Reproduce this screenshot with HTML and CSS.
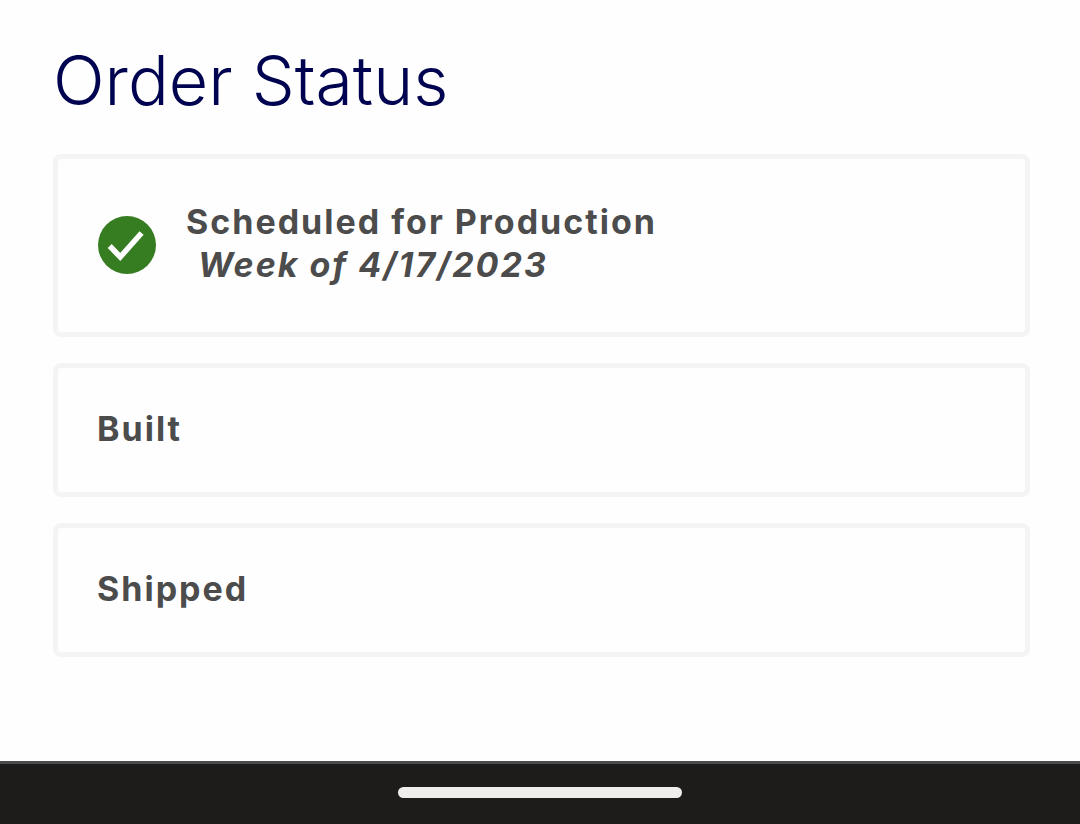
FILE: index.html
```html
<!DOCTYPE html>
<html lang="en">
<head>
    <meta charset="UTF-8">
    <meta name="viewport" content="width=device-width, initial-scale=1.0">
    <title>Order Status</title>
    <link rel="stylesheet" href="styles.css">
</head>
<body>
    <main>
        <h1>Order Status</h1>
        <ol class="status-list">
            <li class="status-card current">
                <svg class="check-icon" viewBox="0 0 58 58" aria-hidden="true">
                    <circle cx="29" cy="29" r="29" fill="#367c20"/>
                    <path d="M11.700 30L22.200 41L43.600 17" fill="none" stroke="#fff" stroke-width="5.500"/>
                </svg>
                <div>
                    <h2>Scheduled for Production</h2>
                    <p class="status-date">Week of 4/17/2023</p>
                </div>
            </li>
            <li class="status-card">
                <h2>Built</h2>
            </li>
            <li class="status-card">
                <h2>Shipped</h2>
            </li>
        </ol>
    </main>
    <footer class="nav-bar">
        <div class="nav-handle"></div>
    </footer>
</body>
</html>
```
FILE: styles.css
```css
* {
    box-sizing: border-box;
}
body {
    display: flex;
    flex-direction: column;
    min-height: 100vh;
    margin: 0;
    background-color: #fefefe;
    color: #4c4c4c;
    font-family: Inter, "Liberation Sans", sans-serif;
}
main {
    flex: 1;
    padding: 40px 50px 0 53px;
}
h1 {
    margin: 0 0 34px;
    color: #00034f;
    font-size: 68px;
    font-weight: 300;
    line-height: 80px;
}
.status-list {
    display: flex;
    flex-direction: column;
    gap: 26px;
    margin: 0;
    padding: 0;
    list-style: none;
}
.status-card {
    padding: 39px 39px 42px;
    border: 5px solid #f4f4f4;
    border-radius: 8px;
}
.current {
    display: flex;
    align-items: flex-start;
    gap: 30px;
    padding: 41px 40px 46px;
}
.check-icon {
    flex: none;
    width: 58px;
    height: 58px;
    margin-top: 16px;
}
h2, .status-date {
    margin: 0;
    font-size: 34px;
    font-weight: 700;
    line-height: 43px;
    letter-spacing: 2px;
}
.status-date {
    padding-left: 12px;
    font-style: italic;
}
.nav-bar {
    padding: 23px 0 26px;
    border-top: 3px solid #4b4b4b;
    background-color: #1e1c1a;
}
.nav-handle {
    width: 284px;
    height: 11px;
    margin: 0 auto;
    border-radius: 6px;
    background-color: #efedec;
}
```
